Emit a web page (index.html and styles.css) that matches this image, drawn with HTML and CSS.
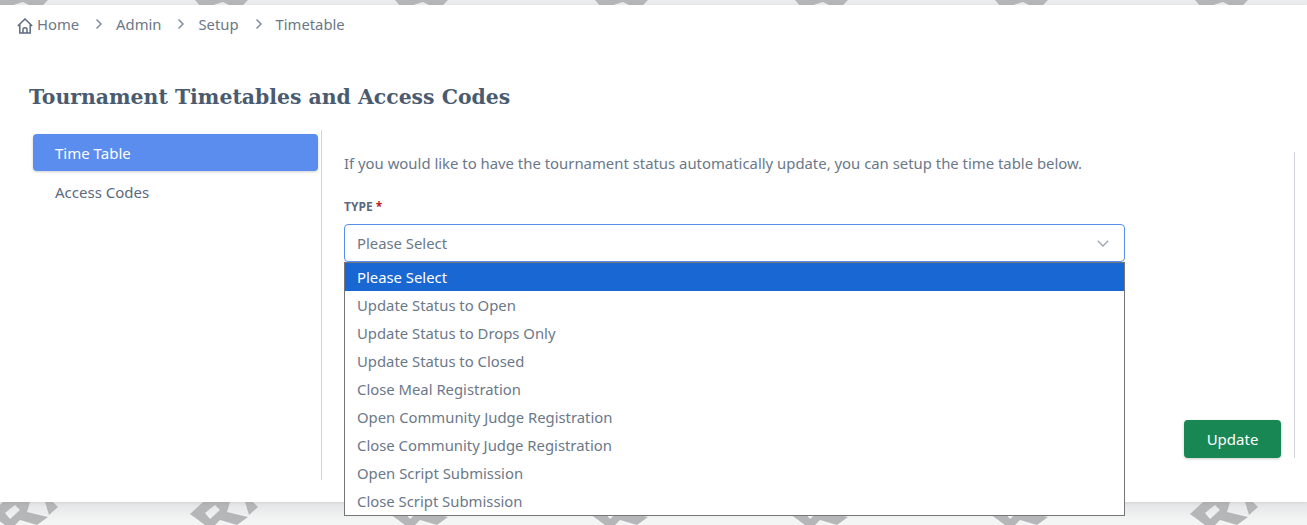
FILE: index.html
```html
<!DOCTYPE html>
<html lang="en">
<head>
    <meta charset="UTF-8">
    <meta name="viewport" content="width=device-width, initial-scale=1.0">
    <title>Tournament Timetables and Access Codes</title>
    <link rel="stylesheet" href="styles.css">
</head>
<body>
    <!-- Watermark behind the card -->
    <svg class="watermark" width="1307" height="525" aria-hidden="true">
        <defs>
            <pattern id="mark" x="-10" y="0" width="200" height="525" patternUnits="userSpaceOnUse">
                <g fill="#b5b6b7">
                    <path d="M5 0 L10 6 L20 6 L33 2 L41 6 L52 6 L58 0 Z"/>
                    <path fill-rule="evenodd" d="M0 514 L13 502 L40 502 L37 512 L58 517 L47 525 L30 520 L25 525 L15 525 Z M15 513 L25 505 L30 510 L20 519 Z"/>
                    <path d="M55 502 L63 502 L68 507 L59 515 Z"/>
                </g>
            </pattern>
        </defs>
        <rect width="1307" height="525" fill="url(#mark)"/>
    </svg>

    <div class="card">
        <nav class="breadcrumb">
            <svg class="home-icon" width="16" height="16" viewBox="0 0 16 16" fill="none" stroke="#5c6b80" stroke-width="1.5">
                <path d="M0.8 8 L8 1 L15.2 8"/>
                <path d="M2.8 6.5 V15 H13.2 V6.5"/>
                <path d="M6 15 V11 Q6 9.8 8 9.8 Q10 9.8 10 11 V15"/>
            </svg>
            <a class="crumb" href="#">Home</a>
            <svg class="crumb-sep" width="8" height="12" viewBox="0 0 8 12" fill="none" stroke="#7f8ea3" stroke-width="1.5"><path d="M1.5 1.5 L6 6 L1.5 10.5"/></svg>
            <a class="crumb" href="#">Admin</a>
            <svg class="crumb-sep" width="8" height="12" viewBox="0 0 8 12" fill="none" stroke="#7f8ea3" stroke-width="1.5"><path d="M1.5 1.5 L6 6 L1.5 10.5"/></svg>
            <a class="crumb" href="#">Setup</a>
            <svg class="crumb-sep" width="8" height="12" viewBox="0 0 8 12" fill="none" stroke="#7f8ea3" stroke-width="1.5"><path d="M1.5 1.5 L6 6 L1.5 10.5"/></svg>
            <a class="crumb" href="#">Timetable</a>
        </nav>

        <h1 class="page-title">Tournament Timetables and Access Codes</h1>

        <div class="panel">
            <aside class="side-nav">
                <a class="side-link active" href="#">Time Table</a>
                <a class="side-link" href="#">Access Codes</a>
            </aside>

            <main class="content">
                <p class="intro">If you would like to have the tournament status automatically update, you can setup the time table below.</p>
                <label class="field-label">TYPE <span class="required">*</span></label>
                <div class="select-box">
                    <span>Please Select</span>
                    <svg width="12" height="7" viewBox="0 0 12 7" fill="none" stroke="#9aa5b4" stroke-width="1.3"><path d="M0.8 0.8 L6 6 L11.2 0.8"/></svg>
                </div>
                <ul class="options">
                    <li class="option selected">Please Select</li>
                    <li class="option">Update Status to Open</li>
                    <li class="option">Update Status to Drops Only</li>
                    <li class="option">Update Status to Closed</li>
                    <li class="option">Close Meal Registration</li>
                    <li class="option">Open Community Judge Registration</li>
                    <li class="option">Close Community Judge Registration</li>
                    <li class="option">Open Script Submission</li>
                    <li class="option">Close Script Submission</li>
                </ul>
            </main>

            <div class="actions">
                <button class="update-button" type="button">Update</button>
            </div>
        </div>
    </div>
</body>
</html>
```

FILE: styles.css
```css
* {
    margin: 0;
    padding: 0;
    box-sizing: border-box;
}

body {
    position: relative;
    width: 1307px;
    height: 525px;
    overflow: hidden;
    font-family: "Noto Sans", sans-serif;
    font-size: 15px;
    color: #6b7889;
    background: linear-gradient(#e3e5e6, #f3f4f4 18px) 0 502px no-repeat, #ebecee;
}

.watermark {
    position: absolute;
    top: 0;
    left: 0;
}

.card {
    position: relative;
    height: 497px;
    margin-top: 5px;
    background-color: #fff;
    box-shadow: 0 1px 4px rgba(0, 0, 0, 0.08);
}

.breadcrumb {
    display: flex;
    align-items: center;
    height: 38px;
    padding-left: 17px;
    font-size: 14.8px;
}

.home-icon {
    margin: 3px 4px 0 0;
}

.crumb {
    color: #6b7889;
    text-decoration: none;
}

.crumb-sep {
    margin: 0 13px 0 16px;
}

.page-title {
    margin: 40px 0 0 29px;
    font-family: "DejaVu Serif", serif;
    font-size: 20.4px;
    line-height: 28px;
    color: #4a5b70;
}

.panel {
    display: flex;
    align-items: flex-start;
    margin-top: 19px;
}

.side-nav {
    width: 322px;
    height: 350px;
    padding: 4px 3px 0 33px;
    border-right: 1px solid #d4d4d8;
}

.side-link {
    display: block;
    height: 37px;
    margin-bottom: 2px;
    padding-left: 22px;
    line-height: 38px;
    color: #5b697d;
    text-decoration: none;
    border-radius: 4px;
}

.side-link.active {
    color: #fff;
    background-color: #5a8dee;
    box-shadow: 0 1px 3px rgba(0, 0, 0, 0.2);
}

.content {
    width: 803px;
    padding: 23px 0 0 22px;
}

.intro {
    font-size: 14.88px;
    line-height: 20px;
}

.field-label {
    display: block;
    margin-top: 26px;
    font-size: 12px;
    font-weight: 700;
    line-height: 16px;
    color: #5b6a7e;
}

.required {
    color: #b91c1c;
}

.select-box {
    display: flex;
    justify-content: space-between;
    align-items: center;
    width: 781px;
    height: 38px;
    margin-top: 9px;
    padding: 0 15px 0 12px;
    font-size: 14.85px;
    border: 1px solid #5a8dee;
    border-radius: 4px;
}

.options {
    width: 781px;
    list-style: none;
    font-size: 14.85px;
    background-color: #fff;
    border: 1px solid #767676;
}

.option {
    height: 28px;
    padding-left: 12px;
    line-height: 28px;
}

.option.selected {
    color: #fff;
    background-color: #1967d2;
}

.actions {
    display: flex;
    align-items: flex-end;
    justify-content: flex-end;
    width: 170px;
    height: 306px;
    margin-top: 22px;
    padding-right: 13px;
    border-right: 1px solid #d4d4dc;
}

.update-button {
    width: 97px;
    height: 38px;
    font-family: inherit;
    font-size: 15px;
    color: #fff;
    background-color: #198754;
    border: none;
    border-radius: 4px;
    box-shadow: 0 1px 3px rgba(0, 0, 0, 0.2);
}
```
